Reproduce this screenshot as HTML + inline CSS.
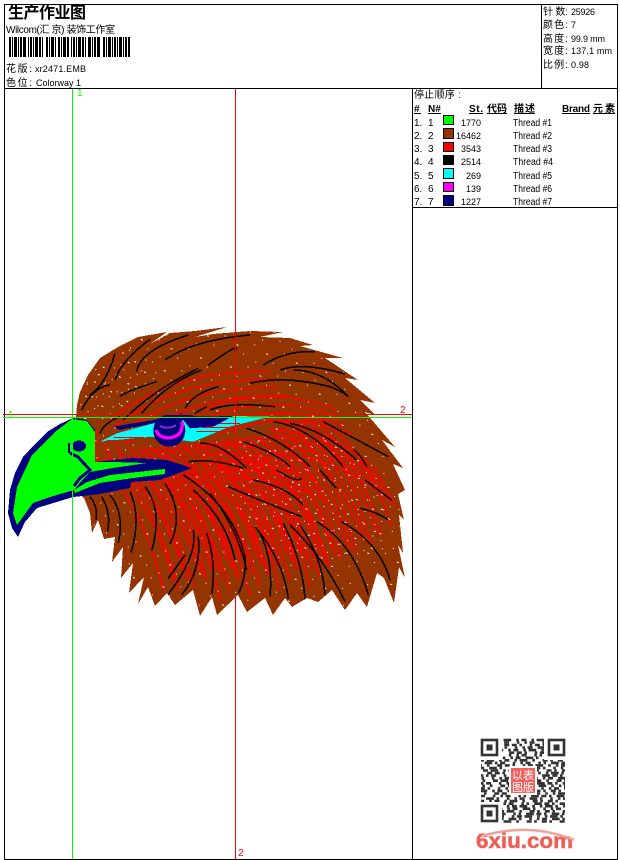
<!DOCTYPE html>
<html lang="zh">
<head>
<meta charset="utf-8">
<title>生产作业图</title>
<style>
html,body{margin:0;padding:0;background:#fff;width:620px;height:860px;overflow:hidden}
svg{display:block}
text{font-family:"Liberation Sans","WenQuanYi Zen Hei","Noto Sans CJK SC",sans-serif;font-size:10px;fill:#000}
.b{font-weight:bold}
.n{font-size:9px}
.k{fill:none;stroke:#000;stroke-width:4.5}
.r{fill:none;stroke:#f00;stroke-width:4.5}
.q line{stroke:#333;stroke-width:2.6}
.d1{stroke-dasharray:5 2.6 2.6 7.7 5 2.6 7.7 5 2.6 2.6 5}
.d2{stroke-dasharray:2.6 5 7.7 2.6 2.6 2.6 5 7.7 2.6 5 2.6}
.d3{stroke-dasharray:7.7 2.6 2.6 5 2.6 7.7 5 2.6 5 2.6 2.6}
.d4{stroke-dasharray:2.6 2.6 5 5 7.7 2.6 2.6 7.7 2.6 5}
</style>
</head>
<body>
<svg width="620" height="860" viewBox="0 0 620 860" xmlns="http://www.w3.org/2000/svg">
<defs>
<pattern id="dots" width="31" height="23" patternUnits="userSpaceOnUse" patternTransform="rotate(17)">
<g fill="#fff"><rect x="3" y="2" width="1" height="1"/><rect x="17" y="7" width="2" height="1"/><rect x="26" y="14" width="1" height="1"/><rect x="9" y="18" width="1" height="1"/></g>
</pattern>
<pattern id="dots2" width="19" height="17" patternUnits="userSpaceOnUse" patternTransform="rotate(31)">
<g fill="#fff"><rect x="2" y="1" width="1" height="1"/><rect x="11" y="6" width="2" height="1"/><rect x="6" y="12" width="1" height="1"/></g>
</pattern>
<clipPath id="body"><polygon points="76,418 77,405 80,392 88,375 100,358 118,347 138,337 167,332 150,344 170,333 195,331 227,327 195,337 213,334 250,331 283,332 260,337 290,338 313,345 300,346 343,358 325,358 358,380 345,378 375,403 360,400 375,415 365,412 395,447 382,440 403,468 393,464 405,490 398,494 404,520 399,515 403,553 398,545 405,578 399,567 394,603 384,578 377,573 367,607 357,593 345,610 332,590 318,602 307,598 292,607 285,598 273,615 265,598 247,612 238,595 217,615 212,597 200,616 193,590 175,605 167,593 155,606 148,587 138,604 144,577 129,593 133,563 121,578 123,547 112,562 115,537 104,539 98,520 92,533 90,513 84,498 75,490"/></clipPath>
<g id="fan" class="r">
<path d="M200,-60Q340,40 410,330"/>
<path d="M215,-62Q365,30 440,300"/>
<path d="M232,-66Q395,25 470,270"/>
</g>
<g id="arc" class="r">
<path d="M120,300Q300,150 600,155"/>
<path d="M400,270Q600,190 800,270"/>
</g>
<g id="sw" class="r">
<path d="M590,300Q780,320 930,460"/>
<path d="M380,385Q540,350 720,440"/>
</g>
</defs>

<!-- frame -->
<g fill="#000" shape-rendering="crispEdges">
<rect x="4" y="4" width="614" height="1"/>
<rect x="4" y="88" width="614" height="1"/>
<rect x="4" y="859" width="614" height="1"/>
<rect x="4" y="4" width="1" height="856"/>
<rect x="617" y="4" width="1" height="856"/>
<rect x="541" y="4" width="1" height="85"/>
<rect x="412" y="88" width="1" height="772"/>
<rect x="412" y="207" width="206" height="1"/>
</g>

<!-- header left -->
<text x="8" y="18" class="b" style="font-size:16px" textLength="78">生产作业图</text>
<text x="6" y="33" textLength="109">Wilcom(汇 京) 装饰工作室</text>
<line x1="9" y1="47" x2="130" y2="47" stroke="#000" stroke-width="20" stroke-dasharray="2 1 1 1 3 1 1 1 2 1 3 2 1 1 2 1 1 1 3 1 2 1 1 3 2 1 1 1 3 1 1 2 2 1 1 1 3 1 2 2 1 1 2 1 1 1 3 1 2 1 1 2 3 1 1 1 2 1 3 3 2 1 1 1 3 1 1 1" shape-rendering="crispEdges"/>
<text x="6" y="72" textLength="26">花版:</text>
<text x="35" y="72" class="n" textLength="51">xr2471.EMB</text>
<text x="6" y="86" textLength="26">色位:</text>
<text x="36" y="86" class="n" textLength="45">Colorway 1</text>

<!-- header right -->
<text x="543" y="15" textLength="25">针 数:</text><text x="571" y="15" class="n" textLength="24">25926</text>
<text x="543" y="28" textLength="25">颜色:</text><text x="571" y="28" class="n">7</text>
<text x="543" y="42" textLength="25">高度:</text><text x="571" y="42" class="n" textLength="34">99.9 mm</text>
<text x="543" y="54" textLength="25">宽度:</text><text x="571" y="54" class="n" textLength="41">137.1 mm</text>
<text x="543" y="68" textLength="25">比例:</text><text x="571" y="68" class="n" textLength="18">0.98</text>

<!-- thread table -->
<text x="414" y="98" textLength="47">停止顺序 :</text>
<text x="414" y="112" class="b">#</text>
<text x="428" y="112" class="b">N#</text>
<text x="469" y="112" class="b" textLength="14">St.</text>
<text x="487" y="112" class="b" textLength="20">代码</text>
<text x="514" y="112" class="b" textLength="21">描述</text>
<text x="562" y="112" class="b" textLength="28">Brand</text>
<text x="593" y="112" class="b" textLength="22">元素</text>
<g fill="#000" shape-rendering="crispEdges">
<rect x="414" y="113" width="7" height="1"/><rect x="428" y="113" width="13" height="1"/><rect x="469" y="113" width="14" height="1"/><rect x="487" y="113" width="20" height="1"/><rect x="514" y="113" width="21" height="1"/><rect x="562" y="113" width="28" height="1"/><rect x="593" y="113" width="22" height="1"/>
</g>
<g shape-rendering="crispEdges" stroke="#000">
<rect x="443.500" y="115.500" width="10" height="9" fill="#0f0"/>
<rect x="443.500" y="128.500" width="10" height="10" fill="#943400"/>
<rect x="443.500" y="142.500" width="10" height="9" fill="#f00"/>
<rect x="443.500" y="155.500" width="10" height="9" fill="#000"/>
<rect x="443.500" y="168.500" width="10" height="10" fill="#0ff"/>
<rect x="443.500" y="182.500" width="10" height="9" fill="#f0f"/>
<rect x="443.500" y="195.500" width="10" height="10" fill="#000080"/>
</g>
<text x="414" y="126">1.</text><text x="428" y="126">1</text><text x="481" y="126" text-anchor="end" class="n">1770</text><text x="513" y="126" textLength="39" lengthAdjust="spacingAndGlyphs">Thread #1</text>
<text x="414" y="139">2.</text><text x="428" y="139">2</text><text x="481" y="139" text-anchor="end" class="n">16462</text><text x="513" y="139" textLength="39" lengthAdjust="spacingAndGlyphs">Thread #2</text>
<text x="414" y="152">3.</text><text x="428" y="152">3</text><text x="481" y="152" text-anchor="end" class="n">3543</text><text x="513" y="152" textLength="39" lengthAdjust="spacingAndGlyphs">Thread #3</text>
<text x="414" y="165">4.</text><text x="428" y="165">4</text><text x="481" y="165" text-anchor="end" class="n">2514</text><text x="513" y="165" textLength="40" lengthAdjust="spacingAndGlyphs">Thread #4</text>
<text x="414" y="179">5.</text><text x="428" y="179">5</text><text x="481" y="179" text-anchor="end" class="n">269</text><text x="513" y="179" textLength="39" lengthAdjust="spacingAndGlyphs">Thread #5</text>
<text x="414" y="192">6.</text><text x="428" y="192">6</text><text x="481" y="192" text-anchor="end" class="n">139</text><text x="513" y="192" textLength="39" lengthAdjust="spacingAndGlyphs">Thread #6</text>
<text x="414" y="205">7.</text><text x="428" y="205">7</text><text x="481" y="205" text-anchor="end" class="n">1227</text><text x="513" y="205" textLength="39" lengthAdjust="spacingAndGlyphs">Thread #7</text>

<!-- guides below eagle -->
<g shape-rendering="crispEdges">
<rect x="72" y="89" width="1" height="770" fill="#0f0"/>
<rect x="235" y="89" width="1" height="770" fill="#f00"/>
</g>

<!-- eagle -->
<g shape-rendering="crispEdges">
<polygon points="76,418 77,405 80,392 88,375 100,358 118,347 138,337 167,332 150,344 170,333 195,331 227,327 195,337 213,334 250,331 283,332 260,337 290,338 313,345 300,346 343,358 325,358 358,380 345,378 375,403 360,400 375,415 365,412 395,447 382,440 403,468 393,464 405,490 398,494 404,520 399,515 403,553 398,545 405,578 399,567 394,603 384,578 377,573 367,607 357,593 345,610 332,590 318,602 307,598 292,607 285,598 273,615 265,598 247,612 238,595 217,615 212,597 200,616 193,590 175,605 167,593 155,606 148,587 138,604 144,577 129,593 133,563 121,578 123,547 112,562 115,537 104,539 98,520 92,533 90,513 84,498 75,490" fill="#943400"/>
<g clip-path="url(#body)">

<!-- red fans -->
<g transform="translate(70 470) scale(.33333)">
<use href="#fan" transform="translate(-130 30)"/>
<use href="#fan" transform="translate(-85 30)"/>
<use href="#fan" transform="translate(-40 20)"/>
<use href="#fan"/>
<use href="#fan" transform="translate(45 -5)"/>
<use href="#fan" transform="translate(90 -10)"/>
<use href="#fan" transform="translate(135 -15)"/>
<use href="#fan" transform="translate(180 -20)"/>
<use href="#fan" transform="translate(225 -25)"/>
<use href="#fan" transform="translate(270 -30)"/>
<use href="#fan" transform="translate(315 -35)"/>
<use href="#fan" transform="translate(360 -40)"/>
<use href="#fan" transform="translate(405 -60)"/>
<use href="#fan" transform="translate(450 -80)"/>
<use href="#fan" transform="translate(495 -100)"/>
<use href="#fan" transform="translate(40 60)"/>
<use href="#fan" transform="translate(130 50)"/>
<use href="#fan" transform="translate(220 30)"/>
<use href="#fan" transform="translate(310 20)"/>
</g>

<g transform="translate(70 320) scale(.33333)">
<use href="#arc"/>
<use href="#arc" transform="translate(10 24)"/>
<use href="#arc" transform="translate(25 48)"/>
<use href="#arc" transform="translate(45 72)"/>
<use href="#sw"/>
<use href="#sw" transform="translate(10 26)"/>
<use href="#sw" transform="translate(25 50)"/>
<use href="#sw" transform="translate(40 76)"/>
<use href="#sw" transform="translate(50 100)"/>
<g class="r">
<path d="M100,370Q120,410 130,430"/><path d="M140,375Q150,400 160,420"/><path d="M180,380Q190,400 200,415"/><path d="M220,380Q230,400 245,415"/><path d="M260,385Q280,400 300,420"/><path d="M80,330Q75,380 80,420"/>
</g>
</g>

<rect x="70" y="320" width="345" height="300" fill="url(#dots)"/>
<polygon points="240,440 340,440 395,500 385,560 300,560 240,520" fill="url(#dots2)"/>
<polygon points="80,380 130,345 160,370 110,420 80,420" fill="url(#dots2)"/>

<!-- upper black feathers -->
<g transform="translate(70 320) scale(.33333)">
<path class="k" d="M35,270Q70,200 120,195"/><path class="k" d="M60,225Q110,190 135,100"/><path class="k" d="M135,180Q155,120 240,58"/><path class="k" d="M200,155Q210,90 355,45"/><path class="k" d="M285,120Q370,60 540,45"/><path class="k" d="M415,135Q520,60 495,95"/><path class="k" d="M580,135Q650,90 735,95"/><path class="k" d="M630,150Q700,125 825,162"/><path class="k" d="M540,190Q640,165 780,200Q820,215 835,230"/><path class="k" d="M670,150Q760,150 835,230"/><path class="k" d="M420,270Q480,245 615,260"/><path class="k" d="M345,265Q370,220 445,200"/><path class="k" d="M160,300Q250,210 385,145"/><path class="k" d="M215,280Q290,190 395,150"/><path class="k" d="M150,230Q165,215 260,185"/><path class="k" d="M610,305Q720,320 820,440"/><path class="k" d="M660,310Q760,330 860,420"/><path class="k" d="M760,305Q880,370 955,410"/><path class="k" d="M530,325Q640,360 720,440"/><path class="k" d="M520,365Q620,400 660,440"/><path class="k" d="M390,370Q450,365 530,445"/><path class="k" d="M355,425Q430,415 520,445"/><path class="k" d="M850,390Q870,400 890,440"/><path class="k" d="M90,340Q100,310 150,290"/><path class="k" d="M375,280Q390,270 410,260"/>
</g>

<!-- lower black feathers -->
<g transform="translate(70 470) scale(.33333)">
<path class="k" d="M60,80Q85,110 78,150"/><path class="k" d="M95,80Q125,130 112,185"/><path class="k" d="M120,75Q165,130 145,218"/><path class="k" d="M180,65Q215,140 183,248"/><path class="k" d="M225,50Q280,120 245,243"/><path class="k" d="M285,40Q345,130 300,222"/><path class="k" d="M370,180Q385,260 285,385"/><path class="k" d="M345,255Q320,290 295,325"/><path class="k" d="M385,200Q395,300 335,375"/><path class="k" d="M410,190Q440,280 425,372"/><path class="k" d="M340,15Q490,110 525,260Q530,320 505,372"/><path class="k" d="M370,60Q470,150 495,270"/><path class="k" d="M420,70Q500,170 530,300"/><path class="k" d="M555,170Q640,270 655,385"/><path class="k" d="M570,190Q610,270 600,380"/><path class="k" d="M660,165Q760,260 825,395"/><path class="k" d="M690,165Q760,270 765,375"/><path class="k" d="M640,160Q700,280 705,390"/><path class="k" d="M740,155Q850,220 895,375"/><path class="k" d="M815,155Q930,220 960,330"/><path class="k" d="M870,115Q920,125 955,150"/><path class="k" d="M885,30Q950,80 965,90"/><path class="k" d="M550,30Q650,50 700,105"/><path class="k" d="M475,50Q590,100 695,140"/><path class="k" d="M750,0Q785,40 800,55"/><path class="k" d="M620,0Q680,40 695,25"/>
</g>
</g>

<!-- beak -->
<polygon points="73,418 60,424 47,432 35,444 23,457 15,473 10,490 8,513 12,528 18,537 25,522 37,508 73,497 100,494 130,488 131,482 160,480 192,468 167,460 133,458 113,460 95,462 95,430 87,420" fill="#000080"/>
<polygon points="72,419 87,421 95,432 95,462 113,462 147,463 113,468 90,472 84,478 74,490 50,497 33,503 17,525 13,513 17,487 32,455 55,432" fill="#0f0"/>
<polygon points="74,490 87,482 110,475 165,469 165,474 133,478 100,483 75,493" fill="#0f0"/>
<ellipse cx="79" cy="446" rx="7" ry="5.500" fill="#000080"/>
<path d="M70,453L78,457L90,470L80,478L74,486" fill="none" stroke="#000080" stroke-width="3"/>
<rect x="68" y="443" width="2" height="10" fill="#000080"/>

<!-- eye, crop coordinates -->
<g transform="translate(70 320) scale(.33333)">
<polygon points="90,365 140,340 250,310 490,288 600,290 480,320 370,365 240,350" fill="#0ff"/>
<path d="M110,362H190M130,352H220M380,335H470M400,322H490M420,310H510" fill="none" stroke="#f00" stroke-width="3"/>
<polygon points="130,320 250,300 330,280 385,290 490,288 430,320 360,325 340,300 250,310 150,330" fill="#000080"/>
<circle cx="298" cy="332" r="48" fill="#000080"/>
<path d="M336,305Q342,350 295,354Q265,352 258,330" fill="none" stroke="#f0f" stroke-width="10"/>
<path d="M270,318Q295,330 318,315" fill="none" stroke="#8a2fc0" stroke-width="6"/>
</g>
</g>

<!-- crosshair on top -->
<g shape-rendering="crispEdges">
<rect x="3" y="414" width="409" height="1" fill="#f00"/>
<rect x="3" y="417" width="409" height="1" fill="#0f0"/>
<rect x="235" y="320" width="1" height="120" fill="#f00"/>
<rect x="72" y="418" width="1" height="80" fill="#0f0"/>
</g>
<text x="77" y="96" style="fill:#0f0">1</text>
<text x="8" y="418" style="fill:#0f0">1</text>
<text x="400" y="413" style="fill:#f00">2</text>
<text x="238" y="856" style="fill:#f00">2</text>

<!-- QR -->
<g class="q">
<line x1="481" y1="740" x2="565" y2="740" class="d1" stroke-dashoffset="3"/>
<line x1="481" y1="742.500" x2="565" y2="742.500" class="d2"/>
<line x1="481" y1="745" x2="565" y2="745" class="d3" stroke-dashoffset="5"/>
<line x1="481" y1="747.600" x2="565" y2="747.600" class="d4" stroke-dashoffset="2"/>
<line x1="481" y1="750.100" x2="565" y2="750.100" class="d1" stroke-dashoffset="11"/>
<line x1="481" y1="752.700" x2="565" y2="752.700" class="d3"/>
<line x1="481" y1="755.200" x2="565" y2="755.200" class="d2" stroke-dashoffset="8"/>
<line x1="481" y1="757.800" x2="565" y2="757.800" class="d4" stroke-dashoffset="14"/>
<line x1="481" y1="760.300" x2="565" y2="760.300" class="d1" stroke-dashoffset="20"/>
<line x1="481" y1="762.900" x2="565" y2="762.900" class="d2" stroke-dashoffset="4"/>
<line x1="481" y1="765.400" x2="565" y2="765.400" class="d3" stroke-dashoffset="12"/>
<line x1="481" y1="768" x2="565" y2="768" class="d4" stroke-dashoffset="7"/>
<line x1="481" y1="770.500" x2="565" y2="770.500" class="d1" stroke-dashoffset="16"/>
<line x1="481" y1="773.100" x2="565" y2="773.100" class="d3" stroke-dashoffset="22"/>
<line x1="481" y1="775.600" x2="565" y2="775.600" class="d2" stroke-dashoffset="13"/>
<line x1="481" y1="778.200" x2="565" y2="778.200" class="d4" stroke-dashoffset="25"/>
<line x1="481" y1="780.700" x2="565" y2="780.700" class="d1" stroke-dashoffset="6"/>
<line x1="481" y1="783.300" x2="565" y2="783.300" class="d2" stroke-dashoffset="18"/>
<line x1="481" y1="785.800" x2="565" y2="785.800" class="d3" stroke-dashoffset="9"/>
<line x1="481" y1="788.400" x2="565" y2="788.400" class="d4" stroke-dashoffset="19"/>
<line x1="481" y1="790.900" x2="565" y2="790.900" class="d1" stroke-dashoffset="27"/>
<line x1="481" y1="793.500" x2="565" y2="793.500" class="d3" stroke-dashoffset="15"/>
<line x1="481" y1="796" x2="565" y2="796" class="d2" stroke-dashoffset="24"/>
<line x1="481" y1="798.600" x2="565" y2="798.600" class="d4" stroke-dashoffset="10"/>
<line x1="481" y1="801.100" x2="565" y2="801.100" class="d1" stroke-dashoffset="30"/>
<line x1="481" y1="803.700" x2="565" y2="803.700" class="d2" stroke-dashoffset="21"/>
<line x1="481" y1="806.200" x2="565" y2="806.200" class="d3" stroke-dashoffset="28"/>
<line x1="481" y1="808.800" x2="565" y2="808.800" class="d4" stroke-dashoffset="17"/>
<line x1="481" y1="811.300" x2="565" y2="811.300" class="d1" stroke-dashoffset="33"/>
<line x1="481" y1="813.900" x2="565" y2="813.900" class="d2" stroke-dashoffset="29"/>
<line x1="481" y1="816.400" x2="565" y2="816.400" class="d3" stroke-dashoffset="23"/>
<line x1="481" y1="819" x2="565" y2="819" class="d4" stroke-dashoffset="31"/>
<line x1="481" y1="821.500" x2="565" y2="821.500" class="d1" stroke-dashoffset="36"/>
</g>
<g>
<rect x="480" y="738" width="22" height="22" fill="#fff"/>
<rect x="482" y="740" width="15" height="15" fill="none" stroke="#333" stroke-width="2.600"/>
<rect x="486.500" y="744.500" width="6" height="6" fill="#333"/>
<rect x="544" y="738" width="22" height="22" fill="#fff"/>
<rect x="549" y="740" width="15" height="15" fill="none" stroke="#333" stroke-width="2.600"/>
<rect x="553.500" y="744.500" width="6" height="6" fill="#333"/>
<rect x="480" y="802" width="22" height="21" fill="#fff"/>
<rect x="482" y="806" width="15" height="15" fill="none" stroke="#333" stroke-width="2.600"/>
<rect x="486.500" y="810.500" width="6" height="6" fill="#333"/>
<rect x="509" y="766" width="28" height="29" fill="#fff"/>
<rect x="511" y="768" width="24" height="25" fill="#f4605c"/>
<text x="512" y="779" style="fill:#fff;font-size:11px">以</text>
<text x="523" y="779" style="fill:#fff;font-size:11px">表</text>
<text x="512" y="791" style="fill:#fff;font-size:11px">图</text>
<text x="523" y="791" style="fill:#fff;font-size:11px">版</text>
</g>

<!-- 6xiu.com -->
<text x="476" y="848" class="b" style="font-size:21px;fill:#ee5f58;stroke:#ee5f58;stroke-width:.5" textLength="97" lengthAdjust="spacingAndGlyphs">6xiu.com</text>
<path d="M482,836Q530,822 574,840" fill="none" stroke="#f3a09b" stroke-width="2.500"/>
</svg>
</body>
</html>
